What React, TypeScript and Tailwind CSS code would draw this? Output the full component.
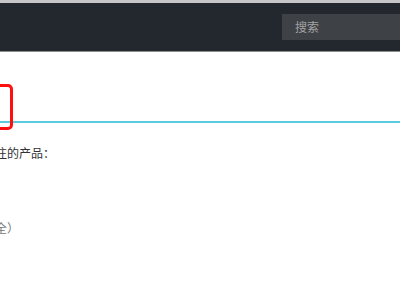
import React from 'react';

const cjk = { fontFamily: '"Noto Sans CJK SC", "Noto Sans", sans-serif' };

export default function App() {
  return (
    <div className="w-[400px] h-[300px] overflow-hidden bg-white relative" style={cjk}>
      {/* top bar */}
      <div className="h-[3px] bg-[#c6c6c8]" />
      <header className="h-[48px] bg-[#23272e] flex justify-end items-start">
        <div className="mt-[11px] w-[118px] h-[26px] bg-[#3e4146] pl-[13px] flex items-center text-[12px] text-[#a3a3a3]">
          搜索
        </div>
      </header>
      <div className="h-px bg-[#8e8e8e]" />

      {/* title row with cyan rule */}
      <div className="h-[69px]" />
      <div className="h-[2px] bg-[#5ccbdf]" />

      {/* highlight frame */}
      <div className="absolute left-[-20px] top-[84px] w-[33px] h-[46px] border-[3px] border-[#ff1010] rounded-[5px]" />

      <div className="mt-[20px] ml-[-5px] h-[20px] leading-[20px] text-[12px] text-[#333] whitespace-nowrap">
        注的产品：
      </div>

      <div className="mt-[55px] ml-[-5px] h-[20px] leading-[20px] text-[12px] text-[#777] whitespace-nowrap">
        全）
      </div>
    </div>
  );
}
